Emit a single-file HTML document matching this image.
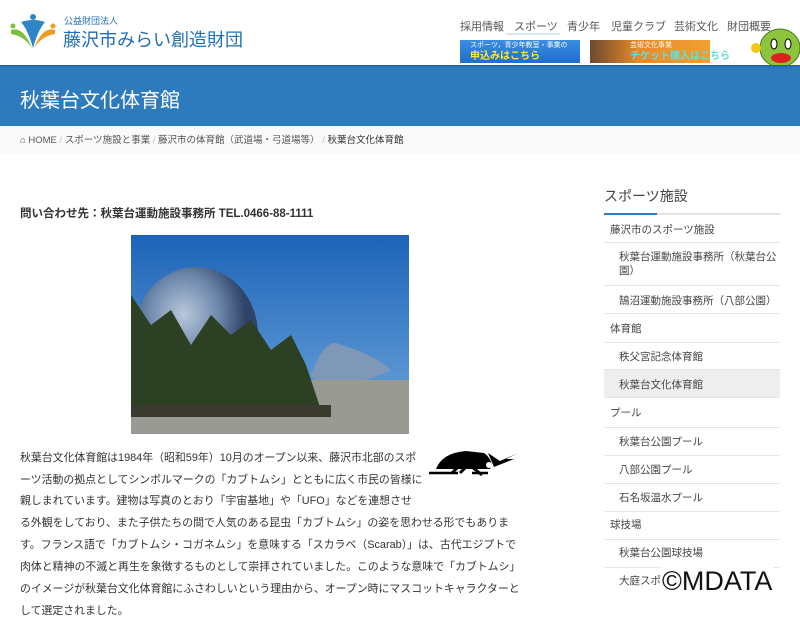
<!DOCTYPE html>
<html><head><meta charset="utf-8"><style>
*{margin:0;padding:0;box-sizing:border-box}
body{width:800px;height:600px;overflow:hidden;background:#fff;font-family:"Liberation Sans","Noto Sans CJK JP",sans-serif;color:#333;position:relative}
.a{position:absolute;white-space:nowrap}
.nav{font-size:11px;color:#555;top:18px}
.sb{position:absolute;left:604px;width:176px;font-size:10.5px;color:#444}
.sb .r{position:absolute;left:0;width:176px;border-bottom:1px solid #e6e6e6}
.p{font-size:10.9px;color:#333;left:20px}
</style></head><body>
<svg class="a" style="left:8px;top:12px" width="50" height="40" viewBox="0 0 50 40">
<circle cx="25" cy="5" r="3" fill="#2e86c9"/><circle cx="5" cy="14" r="2.5" fill="#7cbf3a"/><circle cx="45" cy="14" r="2.5" fill="#f29c1f"/>
<path d="M3 18 Q15 14 24 36 Q16 24 3 22Z" fill="#7cbf3a"/><path d="M47 18 Q35 14 26 36 Q34 24 47 22Z" fill="#f29c1f"/>
<path d="M13 10 Q25 6 37 10 Q30 18 25 36 Q20 18 13 10Z" fill="#2e86c9"/></svg>
<div class="a" style="left:64px;top:14px;font-size:9px;color:#1f6fb6">公益財団法人</div>
<div class="a" style="left:63px;top:26px;font-size:18px;color:#1f6fb6">藤沢市みらい創造財団</div>
<div class="a nav" style="left:460px">採用情報</div>
<div class="a nav" style="left:514px">スポーツ</div>
<div class="a" style="left:506px;top:33px;width:54px;height:2px;background:#dde6f0"></div>
<div class="a nav" style="left:567px">青少年</div>
<div class="a nav" style="left:611px">児童クラブ</div>
<div class="a nav" style="left:674px">芸術文化</div>
<div class="a nav" style="left:727px">財団概要</div>
<div class="a" style="left:460px;top:40px;width:120px;height:23px;background:linear-gradient(#3b8de0,#1e6fd0);font-size:7px;color:#fff;padding-left:10px;line-height:11px">スポーツ，青少年教室・事業の<br><span style="color:#ffe23a;font-size:10px;font-weight:bold">申込みはこちら</span></div>
<div class="a" style="left:590px;top:40px;width:120px;height:23px;background:linear-gradient(90deg,#6b4a2e,#e8892a 40%,#f0a030);font-size:7px;color:#fff;padding-left:40px;line-height:11px">芸術文化事業<br><span style="color:#5fe0e0;font-size:10px;font-weight:bold">チケット購入はこちら</span></div>
<svg class="a" style="left:748px;top:24px" width="52" height="42" viewBox="0 0 52 42"><ellipse cx="32" cy="24" rx="20" ry="19" fill="#8cc43c" stroke="#4a7a1a"/><circle cx="8" cy="24" r="5" fill="#f5c518"/><ellipse cx="26" cy="20" rx="3" ry="5" fill="#fff" stroke="#000"/><ellipse cx="40" cy="20" rx="3" ry="5" fill="#fff" stroke="#000"/><ellipse cx="33" cy="34" rx="10" ry="5" fill="#e02020"/></svg>
<div class="a" style="left:0;top:65px;width:800px;height:61px;background:#2d7bbd;border-top:2px solid #2468a8"></div>
<div class="a" style="left:20px;top:84px;font-size:20px;color:#fff">秋葉台文化体育館</div>
<div class="a" style="left:0;top:126px;width:800px;height:28px;background:#fafafa"></div>
<div class="a" style="left:20px;top:132px;font-size:9.5px;color:#555">⌂ HOME <span style="color:#bbb">/</span> スポーツ施設と事業 <span style="color:#bbb">/</span> 藤沢市の体育館（武道場・弓道場等） <span style="color:#bbb">/</span> <span style="color:#333">秋葉台文化体育館</span></div>
<div class="a" style="left:20px;top:205px;font-size:11.5px;font-weight:bold;color:#333">問い合わせ先：秋葉台運動施設事務所 TEL.0466-88-1111</div>
<svg class="a" style="left:131px;top:235px" width="278" height="199" viewBox="0 0 278 199">
<defs><linearGradient id="sk" x1="0" y1="0" x2="0" y2="1"><stop offset="0" stop-color="#1d63b8"/><stop offset="1" stop-color="#6fa8dc"/></linearGradient>
<radialGradient id="dm" cx=".4" cy=".35"><stop offset="0" stop-color="#b8c8dc"/><stop offset=".6" stop-color="#6a84a8"/><stop offset="1" stop-color="#2e4468"/></radialGradient></defs>
<rect width="278" height="199" fill="url(#sk)"/>
<ellipse cx="65" cy="100" rx="62" ry="68" fill="url(#dm)"/>
<path d="M180 140 Q195 100 210 110 Q240 118 260 135 Q230 150 190 150Z" fill="#7f98b8"/>
<rect y="145" width="278" height="54" fill="#9a9a94"/>
<path d="M0 60 L20 90 L40 75 L60 110 L80 80 L100 100 L120 85 L140 115 L160 100 L175 130 L190 175 L0 180Z" fill="#2d4024"/>
<rect y="170" width="200" height="12" fill="#3a3a2e"/>
</svg>
<svg class="a" style="left:428px;top:447px" width="92" height="33" viewBox="0 0 92 33">
<path d="M8 22 Q14 6 38 4 L56 6 Q62 10 64 18 L62 22Z" fill="#000"/>
<path d="M60 6 L72 14 L90 6 L78 12 L86 12 L66 20 Z" fill="#000"/>
<circle cx="61" cy="18" r="3" fill="#fff"/>
<path d="M1 26 H30 M44 26 H60" stroke="#000" stroke-width="2.5"/>
<path d="M24 26 L30 20 M32 26 L38 20 M44 20 L54 28" stroke="#000" stroke-width="3"/>
</svg>
<div class="a p" style="top:449px">秋葉台文化体育館は1984年（昭和59年）10月のオープン以来、藤沢市北部のスポ</div>
<div class="a p" style="top:471px">ーツ活動の拠点としてシンボルマークの「カブトムシ」とともに広く市民の皆様に</div>
<div class="a p" style="top:492px">親しまれています。建物は写真のとおり「宇宙基地」や「UFO」などを連想させ</div>
<div class="a p" style="top:514px">る外観をしており、また子供たちの間で人気のある昆虫「カブトムシ」の姿を思わせる形でもありま</div>
<div class="a p" style="top:536px">す。フランス語で「カブトムシ・コガネムシ」を意味する「スカラベ（Scarab）」は、古代エジプトで</div>
<div class="a p" style="top:558px">肉体と精神の不滅と再生を象徴するものとして崇拝されていました。このような意味で「カブトムシ」</div>
<div class="a p" style="top:580px">のイメージが秋葉台文化体育館にふさわしいという理由から、オープン時にマスコットキャラクターと</div>
<div class="a p" style="top:602px">して選定されました。</div>
<div class="sb" style="top:186px;font-size:14px;color:#444">スポーツ施設</div>
<div class="sb" style="top:213px;height:2px;background:#e3e3e3"></div>
<div class="sb" style="top:213px;width:53px;height:2px;background:#2d7bbd"></div>
<div class="sb" style="top:369px;height:28px;background:#eee"></div>
<div class="sb" style="top:0;height:0">
<div class="r" style="top:242px"></div><div class="r" style="top:285px"></div><div class="r" style="top:313px"></div><div class="r" style="top:342px"></div><div class="r" style="top:369px"></div><div class="r" style="top:397px"></div><div class="r" style="top:427px"></div><div class="r" style="top:455px"></div><div class="r" style="top:483px"></div><div class="r" style="top:511px"></div><div class="r" style="top:539px"></div><div class="r" style="top:567px"></div>
</div>
<div class="sb" style="top:222px;left:610px">藤沢市のスポーツ施設</div>
<div class="sb" style="top:250px;left:619px;line-height:14px;width:160px">秋葉台運動施設事務所（秋葉台公<br>園）</div>
<div class="sb" style="top:293px;left:619px">鵠沼運動施設事務所（八部公園）</div>
<div class="sb" style="top:321px;left:610px">体育館</div>
<div class="sb" style="top:349px;left:619px">秩父宮記念体育館</div>
<div class="sb" style="top:377px;left:619px">秋葉台文化体育館</div>
<div class="sb" style="top:405px;left:610px">プール</div>
<div class="sb" style="top:434px;left:619px">秋葉台公園プール</div>
<div class="sb" style="top:462px;left:619px">八部公園プール</div>
<div class="sb" style="top:490px;left:619px">石名坂温水プール</div>
<div class="sb" style="top:517px;left:610px">球技場</div>
<div class="sb" style="top:545px;left:619px">秋葉台公園球技場</div>
<div class="sb" style="top:573px;left:619px">大庭スポーツ広場</div>
<div class="a" style="left:660px;top:566px;font-size:27px;color:#111;background:rgba(255,255,255,0.85);line-height:30px;padding:0 2px">©MDATA</div>
</body></html>
